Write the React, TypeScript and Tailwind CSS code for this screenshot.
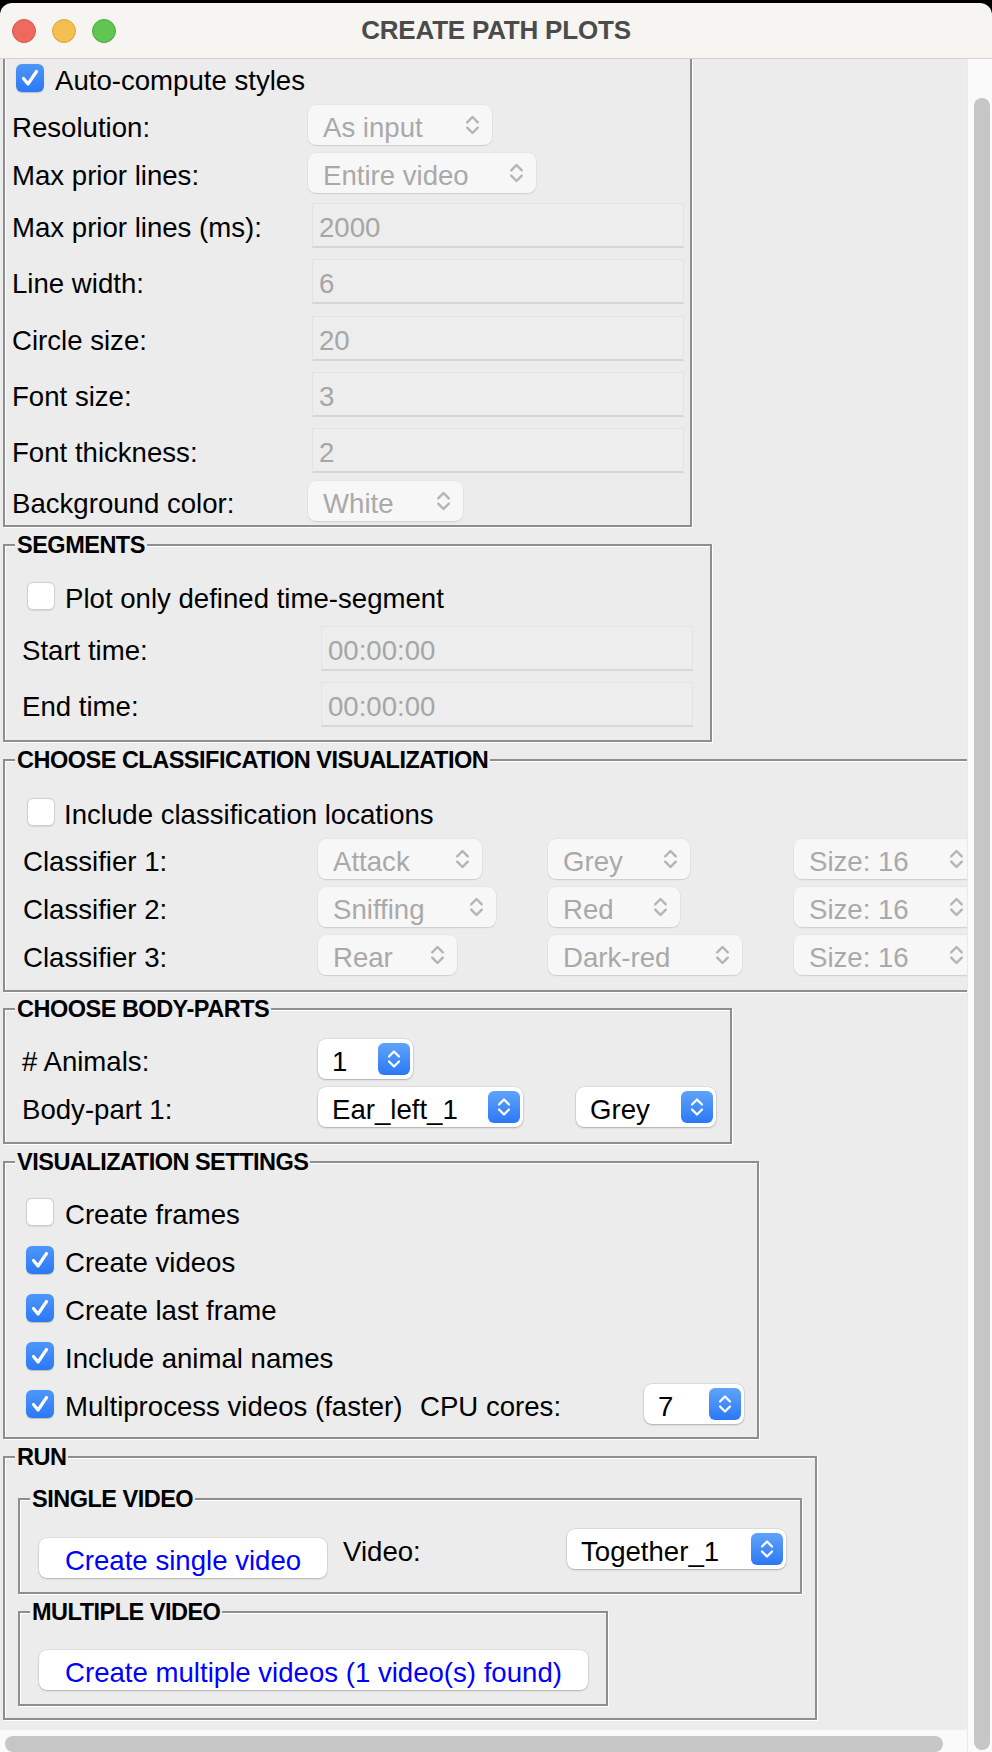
import React from "react";

const T = "pt-[5px] whitespace-nowrap";

function Chevrons({ color, className }: { color: string; className: string }) {
  return (
    <svg
      viewBox="0 0 16 22"
      className={className}
      fill="none"
      stroke={color}
      strokeWidth={2.2}
      strokeLinecap="round"
      strokeLinejoin="round"
    >
      <path d="M3 8.5 L8 3.5 L13 8.5" />
      <path d="M3 13.5 L8 18.5 L13 13.5" />
    </svg>
  );
}

function Combo({
  text,
  active,
  className,
}: {
  text: string;
  active?: boolean;
  className: string;
}) {
  if (active) {
    return (
      <div
        className={`flex h-[40px] shrink-0 items-center justify-between rounded-[8px] bg-white pl-[14px] pr-[3px] text-black shadow-[0_0_0_0.5px_rgba(0,0,0,0.12),0_1px_2px_rgba(0,0,0,0.22)] ${className}`}
      >
        <span className={T}>{text}</span>
        <div className="flex h-[32px] w-[32px] items-center justify-center rounded-[6px] bg-linear-to-b from-[#5fa3fa] to-[#2b78f5]">
          <Chevrons color="#ffffff" className="h-[22px] w-[16px]" />
        </div>
      </div>
    );
  }
  return (
    <div
      className={`flex h-[40px] shrink-0 items-center justify-between rounded-[8px] bg-[#f7f7f7] pl-[15px] pr-[11px] text-[#a9a9a9] shadow-[0_0_0_0.5px_rgba(0,0,0,0.05),0_1px_1.5px_rgba(0,0,0,0.1)] ${className}`}
    >
      <span className={T}>{text}</span>
      <Chevrons color="#b3b3b3" className="h-[24px] w-[17px]" />
    </div>
  );
}

function Entry({ value, className }: { value: string; className: string }) {
  return (
    <div
      className={`flex h-[45px] shrink-0 items-center border border-b-2 border-[#e3e3e3] border-b-[#d6d6d6] bg-[#ededed] pl-[6px] text-[#a6a6a6] ${className}`}
    >
      <span className={T}>{value}</span>
    </div>
  );
}

function Check({ checked }: { checked?: boolean }) {
  if (checked) {
    return (
      <div className="flex h-[28px] w-[28px] shrink-0 items-center justify-center rounded-[6px] bg-linear-to-b from-[#4e96f9] to-[#2b78f5] shadow-[0_0.5px_1px_rgba(0,0,0,0.2)]">
        <svg viewBox="0 0 28 28" className="h-[28px] w-[28px]">
          <path
            d="M7.5 14.5 L12 20 L20.5 7.5"
            fill="none"
            stroke="#ffffff"
            strokeWidth={3.2}
            strokeLinecap="round"
            strokeLinejoin="round"
          />
        </svg>
      </div>
    );
  }
  return (
    <div className="h-[28px] w-[28px] shrink-0 rounded-[6px] border border-[#d0d0d0] bg-white shadow-[0_0.5px_1px_rgba(0,0,0,0.1)]" />
  );
}

function Group({
  title,
  className,
  children,
}: {
  title: string;
  className: string;
  children: React.ReactNode;
}) {
  return (
    <div
      className={`relative shrink-0 border-2 border-[#8e8e8e] shadow-[1px_1px_0_#ffffff,inset_1px_1px_0_#ffffff] ${className}`}
    >
      <div className="absolute left-[10px] top-[-14px] whitespace-nowrap bg-[#ececec] px-[2px] text-[23.5px] font-bold leading-[26px] tracking-[-0.5px] text-black">
        {title}
      </div>
      {children}
    </div>
  );
}

function Button({ text, className }: { text: string; className: string }) {
  return (
    <div
      className={`flex h-[40px] shrink-0 items-center justify-center rounded-[8px] bg-white text-[#0000ff] shadow-[0_0_0_0.5px_rgba(0,0,0,0.1),0_1px_2px_rgba(0,0,0,0.2)] ${className}`}
    >
      <span className={T}>{text}</span>
    </div>
  );
}

export default function App() {
  return (
    <div className="flex h-[1752px] w-[992px] flex-col overflow-hidden bg-black pt-[3px] font-['Liberation_Sans',Arial,sans-serif] text-[27.6px] text-black">
      {/* Title bar */}
      <div className="grid h-[56px] shrink-0 grid-cols-[1fr_auto_1fr] items-center rounded-t-[12px] border-b border-[#d2d2d2] bg-[#f7f5f1]">
        <div className="flex gap-[16px] pl-[12px]">
          <div className="h-[24px] w-[24px] rounded-full border border-[#d8574c] bg-[#ee6a5f]" />
          <div className="h-[24px] w-[24px] rounded-full border border-[#dba33a] bg-[#f5bf4f]" />
          <div className="h-[24px] w-[24px] rounded-full border border-[#4da93e] bg-[#61c554]" />
        </div>
        <div className="text-[26px] font-bold tracking-[-0.2px] text-[#4b4b4b]">
          CREATE PATH PLOTS
        </div>
        <div />
      </div>

      {/* Body */}
      <div className="flex min-h-0 flex-1">
        <div className="flex w-[967px] shrink-0 flex-col">
          <div className="flex h-[1671px] shrink-0 flex-col items-start overflow-hidden bg-[#ececec]">
            {/* Style settings (top clipped) */}
            <div className="ml-[3px] w-[689px] shrink-0 border-2 border-t-0 border-[#8e8e8e] pb-[4px] pl-[7px] pt-[5px] shadow-[1px_1px_0_#ffffff,inset_1px_0_0_#ffffff]">
              <div className="flex h-[28px] items-center gap-[11px] pl-[4px]">
                <Check checked />
                <span className={T}>Auto-compute styles</span>
              </div>
              <div className="mt-[13px] flex h-[40px] items-center">
                <span className={`w-[296px] shrink-0 ${T}`}>Resolution:</span>
                <Combo text="As input" className="w-[184px]" />
              </div>
              <div className="mt-[8px] flex h-[40px] items-center">
                <span className={`w-[296px] shrink-0 ${T}`}>Max prior lines:</span>
                <Combo text="Entire video" className="w-[228px]" />
              </div>
              <div className="mt-[10px] flex h-[45px] items-center">
                <span className={`w-[296px] shrink-0 ${T}`}>Max prior lines (ms):</span>
                <Entry value="2000" className="ml-[4px] w-[372px]" />
              </div>
              <div className="mt-[11px] flex h-[45px] items-center">
                <span className={`w-[296px] shrink-0 ${T}`}>Line width:</span>
                <Entry value="6" className="ml-[4px] w-[372px]" />
              </div>
              <div className="mt-[12px] flex h-[45px] items-center">
                <span className={`w-[296px] shrink-0 ${T}`}>Circle size:</span>
                <Entry value="20" className="ml-[4px] w-[372px]" />
              </div>
              <div className="mt-[11px] flex h-[45px] items-center">
                <span className={`w-[296px] shrink-0 ${T}`}>Font size:</span>
                <Entry value="3" className="ml-[4px] w-[372px]" />
              </div>
              <div className="mt-[11px] flex h-[45px] items-center">
                <span className={`w-[296px] shrink-0 ${T}`}>Font thickness:</span>
                <Entry value="2" className="ml-[4px] w-[372px]" />
              </div>
              <div className="mt-[8px] flex h-[40px] items-center">
                <span className={`w-[296px] shrink-0 ${T}`}>Background color:</span>
                <Combo text="White" className="w-[155px]" />
              </div>
            </div>

            {/* Segments */}
            <Group title="SEGMENTS" className="ml-[3px] mt-[17px] w-[709px] pb-[13px] pl-[17px] pt-[36px]">
              <div className="flex h-[28px] items-center gap-[10px] pl-[5px]">
                <Check />
                <span className={T}>Plot only defined time-segment</span>
              </div>
              <div className="mt-[16px] flex h-[45px] items-center">
                <span className={`w-[299px] shrink-0 ${T}`}>Start time:</span>
                <Entry value="00:00:00" className="w-[372px]" />
              </div>
              <div className="mt-[11px] flex h-[45px] items-center">
                <span className={`w-[299px] shrink-0 ${T}`}>End time:</span>
                <Entry value="00:00:00" className="w-[372px]" />
              </div>
            </Group>

            {/* Classification */}
            <Group
              title="CHOOSE CLASSIFICATION VISUALIZATION"
              className="ml-[3px] mt-[17px] w-[1000px] pb-[15px] pl-[18px] pt-[37px]"
            >
              <div className="flex h-[28px] items-center gap-[9px] pl-[4px]">
                <Check />
                <span className={T}>Include classification locations</span>
              </div>
              <div className="mt-[13px] flex h-[40px] items-center">
                <span className={`w-[295px] shrink-0 ${T}`}>Classifier 1:</span>
                <div className="w-[230px] shrink-0">
                  <Combo text="Attack" className="w-[164px]" />
                </div>
                <div className="w-[246px] shrink-0">
                  <Combo text="Grey" className="w-[142px]" />
                </div>
                <Combo text="Size: 16" className="w-[182px]" />
              </div>
              <div className="mt-[8px] flex h-[40px] items-center">
                <span className={`w-[295px] shrink-0 ${T}`}>Classifier 2:</span>
                <div className="w-[230px] shrink-0">
                  <Combo text="Sniffing" className="w-[178px]" />
                </div>
                <div className="w-[246px] shrink-0">
                  <Combo text="Red" className="w-[132px]" />
                </div>
                <Combo text="Size: 16" className="w-[182px]" />
              </div>
              <div className="mt-[8px] flex h-[40px] items-center">
                <span className={`w-[295px] shrink-0 ${T}`}>Classifier 3:</span>
                <div className="w-[230px] shrink-0">
                  <Combo text="Rear" className="w-[139px]" />
                </div>
                <div className="w-[246px] shrink-0">
                  <Combo text="Dark-red" className="w-[194px]" />
                </div>
                <Combo text="Size: 16" className="w-[182px]" />
              </div>
            </Group>

            {/* Body parts */}
            <Group title="CHOOSE BODY-PARTS" className="ml-[3px] mt-[16px] w-[729px] pb-[15px] pl-[17px] pt-[29px]">
              <div className="flex h-[40px] items-center">
                <span className={`w-[296px] shrink-0 ${T}`}># Animals:</span>
                <Combo text="1" active className="w-[95px]" />
              </div>
              <div className="mt-[8px] flex h-[40px] items-center">
                <span className={`w-[296px] shrink-0 ${T}`}>Body-part 1:</span>
                <Combo text="Ear_left_1" active className="w-[205px]" />
                <Combo text="Grey" active className="ml-[53px] w-[140px]" />
              </div>
            </Group>

            {/* Visualization settings */}
            <Group
              title="VISUALIZATION SETTINGS"
              className="ml-[3px] mt-[17px] w-[756px] pb-[19px] pl-[21px] pt-[35px]"
            >
              <div className="flex h-[28px] items-center gap-[11px]">
                <Check />
                <span className={T}>Create frames</span>
              </div>
              <div className="mt-[20px] flex h-[28px] items-center gap-[11px]">
                <Check checked />
                <span className={T}>Create videos</span>
              </div>
              <div className="mt-[20px] flex h-[28px] items-center gap-[11px]">
                <Check checked />
                <span className={T}>Create last frame</span>
              </div>
              <div className="mt-[20px] flex h-[28px] items-center gap-[11px]">
                <Check checked />
                <span className={T}>Include animal names</span>
              </div>
              <div className="mt-[20px] flex h-[28px] items-center">
                <Check checked />
                <span className={`ml-[11px] w-[355px] shrink-0 ${T}`}>
                  Multiprocess videos (faster)
                </span>
                <span className={`w-[224px] shrink-0 ${T}`}>CPU cores:</span>
                <Combo text="7" active className="w-[100px]" />
              </div>
            </Group>

            {/* Run */}
            <Group title="RUN" className="ml-[3px] mt-[17px] w-[814px] pb-[12px] pl-[13px] pt-[40px]">
              <Group title="SINGLE VIDEO" className="w-[784px] pb-[14px] pl-[19px] pt-[29px]">
                <div className="flex items-start">
                  <Button text="Create single video" className="mt-[9px] w-[288px]" />
                  <div className="ml-[16px] flex h-[40px] w-[224px] shrink-0 items-center">
                    <span className={T}>Video:</span>
                  </div>
                  <Combo text="Together_1" active className="w-[219px]" />
                </div>
              </Group>
              <Group title="MULTIPLE VIDEO" className="mt-[17px] w-[590px] pb-[14px] pl-[19px] pt-[37px]">
                <Button text="Create multiple videos (1 video(s) found)" className="w-[549px]" />
              </Group>
            </Group>
          </div>

          {/* Horizontal scrollbar */}
          <div className="h-[22px] shrink-0 bg-[#fafafa] pl-[5px] pt-[6px]">
            <div className="h-[16px] w-[938px] rounded-full bg-[#c6c6c6]" />
          </div>
        </div>

        {/* Vertical scrollbar */}
        <div className="w-[25px] shrink-0 border-l border-[#e9e9e9] bg-[#fafafa] pl-[6px] pt-[39px]">
          <div className="h-[1652px] w-[16px] rounded-full bg-[#c6c6c6]" />
        </div>
      </div>
    </div>
  );
}
